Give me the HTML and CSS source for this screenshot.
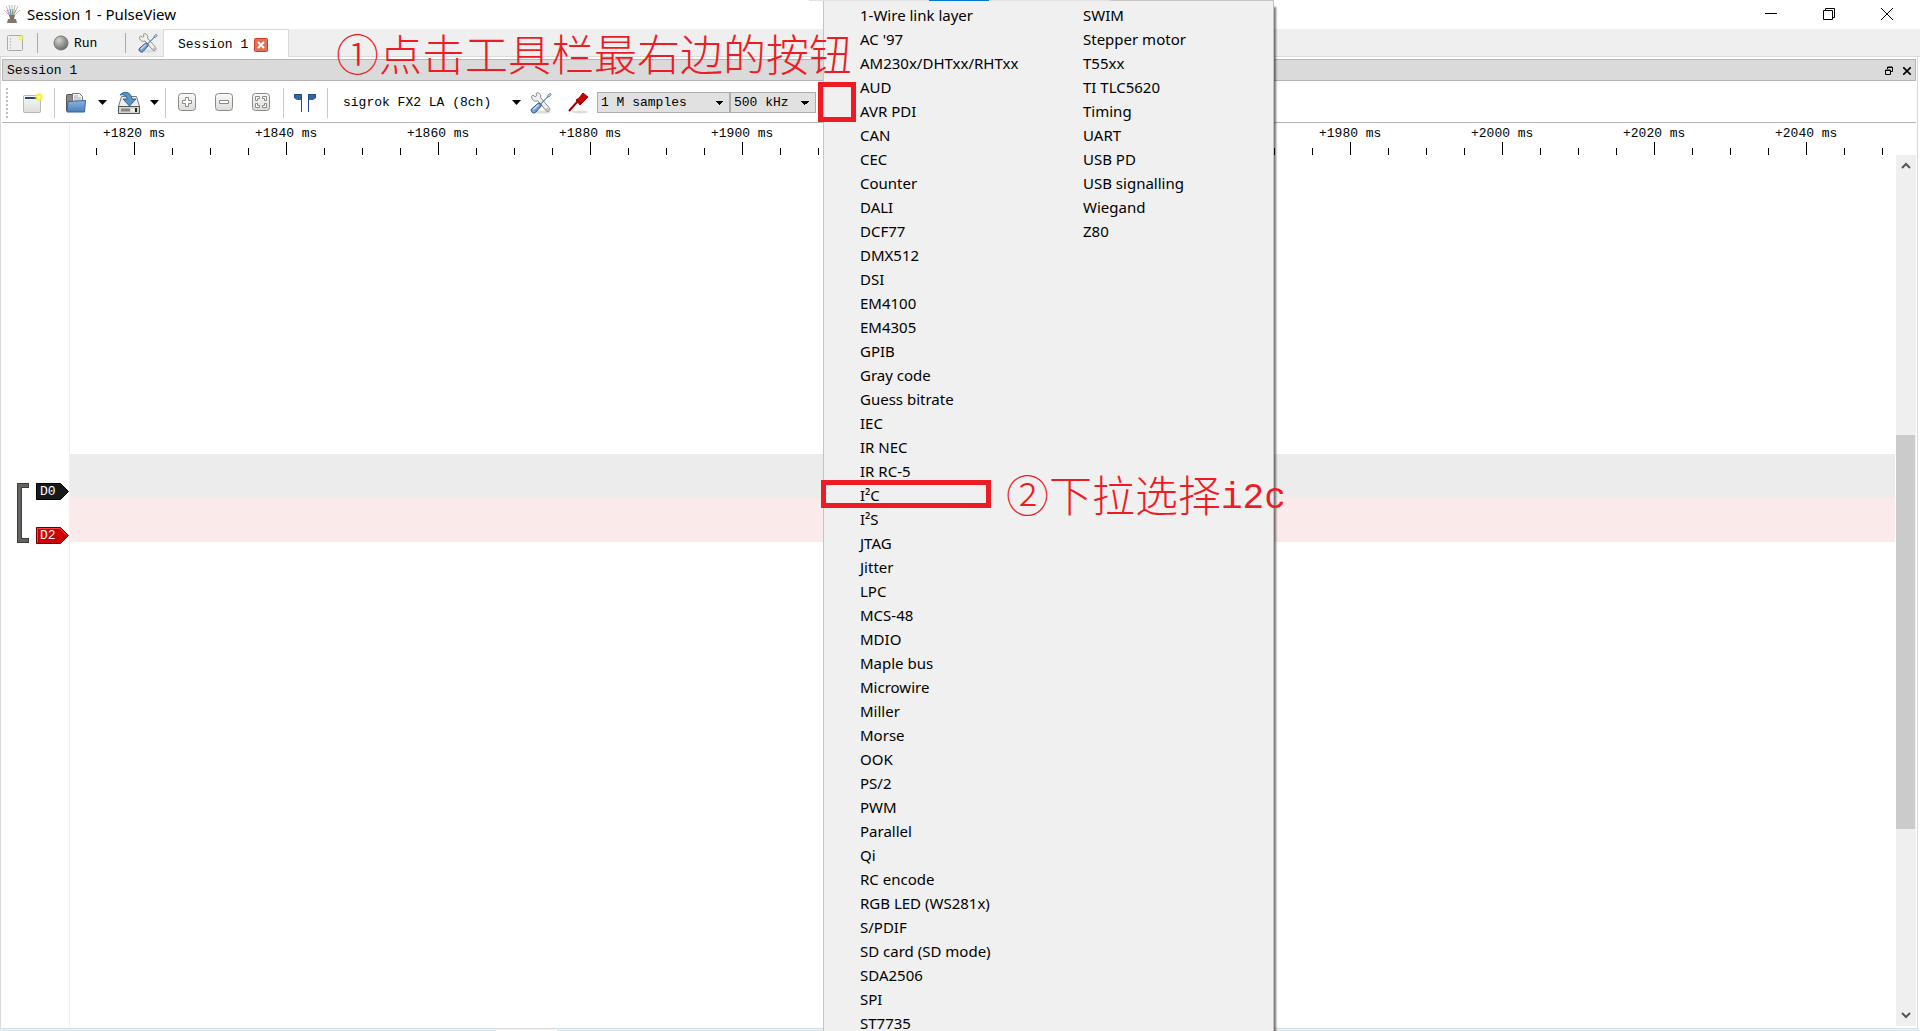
FILE: index.html
```html
<!DOCTYPE html>
<html lang="en">
<head>
    <meta charset="UTF-8">
    <meta name="viewport" content="width=device-width, initial-scale=1.0">
    <title>Session 1 - PulseView</title>
    <link rel="stylesheet" href="styles.css">
</head>
<body>
    <svg class="defs" width="0" height="0">
        <defs>
            <linearGradient id="blue" x1="0" y1="0" x2="0" y2="1"><stop offset="0" stop-color="#8db4e0"/><stop offset="1" stop-color="#4a7dbb"/></linearGradient>
            <linearGradient id="paper" x1="0" y1="0" x2="0" y2="1"><stop offset="0" stop-color="#fafafa"/><stop offset="1" stop-color="#dcdcda"/></linearGradient>
            <radialGradient id="ball" cx=".35" cy=".3" r=".75"><stop offset="0" stop-color="#d5d6d2"/><stop offset=".6" stop-color="#91938f"/><stop offset="1" stop-color="#666864"/></radialGradient>
            <radialGradient id="glow"><stop offset="0" stop-color="#fffde0"/><stop offset=".45" stop-color="#f8ef2a"/><stop offset="1" stop-color="#f8ef2a" stop-opacity="0"/></radialGradient>
            <symbol id="tools" viewBox="0 0 22 22">
                <ellipse cx="12" cy="20" rx="9" ry="1.6" fill="#ddd"/>
                <path d="M1.5 4.5 3 3.2l2.2 1.6 1.3-1L6 1.4 7.5.7c2.6.4 3.8 2.4 3 4.9l8.9 10.2c1.4 2-.9 4.7-3 3.2L7.8 8.8c-3.3 1.2-5.8-.5-6.3-4.3z" fill="#f0f0ee" stroke="#858783"/>
                <circle cx="17.4" cy="17.3" r=".9" fill="#fff" stroke="#858783" stroke-width=".7"/>
                <path d="M10 12.5 17.6 5l.3-1.9 2.3-1.7 1 .9-1.7 2.4-1.8.3-7.6 7.6z" fill="#d5e0ed" stroke="#4a78ad" stroke-width=".9"/>
                <path d="M8.2 11.3c1.5-.6 3.4 1 3 2.7L5.6 20.3c-2.2 2-5.7-.9-4-3.4z" fill="#7ca0cf" stroke="#204a87"/>
                <path d="m3.2 17.6 5.2-4.8" stroke="#d2e1f2" stroke-width="1.4"/>
            </symbol>
        </defs>
    </svg>

    <header class="titlebar">
        <svg class="logo" width="18" height="20" viewBox="0 0 18 20" fill="none">
            <path d="M8 13 1 6M8 12 3 2M9 12 6 1M9 12 9 1M10 12 12 1M10 12 15 2M10 13 17 6" stroke="#b8b8b8"/>
            <path d="m7 12-3-6" stroke="#c678c6"/><path d="m8 12-1-7" stroke="#6d91cf"/><path d="m9 12 1-7" stroke="#71ad5b"/><path d="m10 12 3-6" stroke="#df8b52"/>
            <path d="M6 11h6l-1 4H7z" fill="#77706b"/><path d="M5 15h8l1 4H4z" fill="#84766d"/>
        </svg>
        <h1>Session 1 - PulseView</h1>
        <div class="window-buttons">
            <button aria-label="Minimize"><svg width="12" height="12"><path d="M0 5.500h12" stroke="#000"/></svg></button>
            <button aria-label="Restore"><svg width="12" height="12" fill="none" stroke="#000"><path d="M.5 2.500h9v9h-9zM2.500 2V.5h9v9H10"/></svg></button>
            <button aria-label="Close"><svg width="12" height="12" stroke="#000"><path d="m0 0 12 12M12 0 0 12"/></svg></button>
        </div>
    </header>

    <nav class="main-toolbar">
        <button class="new-session" aria-label="New session">
            <svg width="18" height="18"><rect x=".5" y="1.500" width="15" height="15" rx="1" fill="#eeeeec" stroke="#aaa"/><path d="M3 5h1M3 8h1M3 11h1M3 14h1" stroke="#999"/><circle cx="14" cy="4" r="3.500" fill="url(#glow)" opacity=".7"/></svg>
        </button>
        <span class="sep"></span>
        <button class="run"><svg width="16" height="16"><circle cx="8" cy="8" r="7" fill="url(#ball)" stroke="#777974"/></svg>Run</button>
        <span class="sep"></span>
        <button class="settings" aria-label="Settings"><svg width="20" height="20"><use href="#tools"/></svg></button>
        <div class="tab">
            <a href="#session">Session 1</a>
            <button aria-label="Close tab"><svg width="14" height="14"><rect x=".5" y=".5" width="13" height="13" rx="1" fill="#e4714f" stroke="#cf3d24"/><path d="m4 4 6 6M10 4l-6 6" stroke="#fff" stroke-width="2"/></svg></button>
        </div>
    </nav>

    <main class="session" id="session">
        <div class="dock-title">
            <h2>Session 1</h2>
            <button aria-label="Float"><svg width="8" height="9" fill="none" stroke="#000"><path d="M.5 4h5v4.500h-5zM0 4.500h6M2.500 3V1h5v4.500H6M2 1.500h6"/></svg></button>
            <button aria-label="Close session"><svg width="8" height="8" stroke="#000" stroke-width="1.600"><path d="m0 0 8 8M8 0 0 8"/></svg></button>
        </div>

        <div class="toolbar">
            <span class="grip"></span>
            <button class="new-view" aria-label="New view">
                <svg width="22" height="22"><rect x="1.500" y="3.500" width="17" height="17" rx="1" fill="url(#paper)" stroke="#b6b8b4"/><path d="M3 6h15" stroke="#204a87" stroke-width="2"/><circle cx="17" cy="5" r="5" fill="url(#glow)"/></svg>
            </button>
            <span class="sep"></span>
            <button class="open" aria-label="Open">
                <svg width="22" height="22"><path d="M1.500 19V3.500q0-1 1-1H8l1 2h7v14" fill="#888a85" stroke="#555753"/><path d="M7.500 14V1.500h7l3 3V14" fill="#f4f4f4" stroke="#777"/><path d="M9 4h4M9 6h7M9 8h7" stroke="#aaa"/><path d="M3 9.500 20.500 8.500 19.500 20H2z" fill="url(#blue)" stroke="#3465a4"/></svg>
            </button>
            <button class="arrow" aria-label="Open menu"><svg width="9" height="5"><path d="M0 0h9L4.500 5z"/></svg></button>
            <button class="save" aria-label="Save">
                <svg width="24" height="24"><path d="M4.500 5.500h15l3 10v7h-21v-7z" fill="#eee" stroke="#777974"/><path d="M1.500 15.500h21v7h-21z" fill="#d3d7cf" stroke="#555753"/><path d="M4 19h9" stroke="#888" stroke-width="3"/><path d="M15 18v3M17 18v3" stroke="#fff"/><path d="M19 17v4" stroke="#222" stroke-width="2"/><path d="M3 4C6 0 14 0 15 8h4l-6.500 7L6 8h4C10 5 7 3 3 4z" fill="#5e93bd" stroke="#26659a"/></svg>
            </button>
            <button class="arrow" aria-label="Save menu"><svg width="9" height="5"><path d="M0 0h9L4.500 5z"/></svg></button>
            <span class="sep"></span>
            <button class="zoom" aria-label="Zoom in"><svg width="19" height="19" fill="none" stroke="#888a85"><rect x=".5" y=".5" width="17" height="17" rx="3" fill="url(#paper)"/><path d="M7.500 4.500h3v3h3v3h-3v3h-3v-3h-3v-3h3z" fill="#fff"/></svg></button>
            <button class="zoom" aria-label="Zoom out"><svg width="19" height="19" fill="none" stroke="#888a85"><rect x=".5" y=".5" width="17" height="17" rx="3" fill="url(#paper)"/><path d="M4.500 7.500h9v3h-9z" fill="#fff"/></svg></button>
            <button class="zoom" aria-label="Zoom to fit"><svg width="19" height="19" fill="none" stroke="#888a85"><rect x=".5" y=".5" width="17" height="17" rx="3" fill="url(#paper)"/><path d="M3.500 3.500h4v2h-2v2h-2zM14.500 3.500h-4v2h2v2h2zM3.500 14.500h4v-2h-2v-2h-2zM14.500 14.500h-4v-2h2v-2h2z" fill="#fff"/></svg></button>
            <span class="sep"></span>
            <button class="cursors" aria-label="Show cursors"><svg width="22" height="18"><path d="M0 0h8v18H7V6H3L0 4zM22 0h-8v18h1V6h4l3-2z" fill="#3465a4"/><path d="M.5 4V.5h7V18M21.500 4V.5h-7V18" fill="none" stroke="#204a87"/></svg></button>
            <span class="sep"></span>
            <button class="device">sigrok FX2 LA (8ch)<svg width="9" height="5"><path d="M0 0h9L4.500 5z"/></svg></button>
            <button class="configure" aria-label="Configure device"><svg width="22" height="22"><use href="#tools"/></svg></button>
            <button class="probe" aria-label="Channels"><svg width="21" height="22"><ellipse cx="12" cy="20" rx="8" ry="1.400" fill="#ddd"/><path d="m1 19 9-10" stroke="#a40000" stroke-width="2"/><path d="m8 8 3-2 4-5 5 4-5 5-3 3z" fill="#c00" stroke="#a40000"/><path d="m9 8 4 4" stroke="#a40000"/></svg></button>
            <select class="samples" aria-label="Number of samples"><option>1 M samples</option></select>
            <select class="rate" aria-label="Sample rate"><option>500 kHz</option></select>
        </div>

        <div class="view">
            <div class="channels">
                <svg class="bracket" width="13" height="61" fill="none"><path d="M13 2.500H3.500v55H13" stroke="#3c3e3b" stroke-width="5"/><path d="M12 2.500H3.500v55H12" stroke="#626460" stroke-width="3"/></svg>
                <div class="tags">
                    <div class="tag"><svg width="33" height="17"><path d="M.5.500h24l8 8-8 8H.5z" fill="#161a1b" stroke="#000"/></svg><span>D0</span></div>
                    <div class="tag"><svg width="33" height="17"><path d="M.5.500h24l8 8-8 8H.5z" fill="#c00" stroke="#600"/><path d="M1.500 15.500v-14h22.500l7 7" fill="none" stroke="#f44"/></svg><span>D2</span></div>
                </div>
            </div>
            <div class="plot">
                <div class="ruler">
                    <span>+1820 ms</span><span>+1840 ms</span><span>+1860 ms</span><span>+1880 ms</span><span>+1900 ms</span><span>+1920 ms</span><span>+1940 ms</span><span>+1960 ms</span><span>+1980 ms</span><span>+2000 ms</span><span>+2020 ms</span><span>+2040 ms</span>
                </div>
                <div class="traces">
                    <div class="lanes">
                        <div class="lane d0"></div>
                        <div class="lane d2"></div>
                    </div>
                    <div class="scrollbar">
                        <button aria-label="Scroll up"><svg width="10" height="8" fill="none" stroke="#555" stroke-width="2"><path d="m1 6 4-4 4 4"/></svg></button>
                        <div class="scroll-track"><div class="thumb"></div></div>
                        <button aria-label="Scroll down"><svg width="10" height="8" fill="none" stroke="#555" stroke-width="2"><path d="m1 1 4 4 4-4"/></svg></button>
                    </div>
                </div>
            </div>
        </div>
    </main>
    <footer class="desktop-edge"><span></span></footer>

    <!-- protocol decoder list -->
    <div class="top-edge"><span></span></div>
    <menu class="decoders">
        <li><button>1-Wire link layer</button></li>
        <li><button>AC '97</button></li>
        <li><button>AM230x/DHTxx/RHTxx</button></li>
        <li><button>AUD</button></li>
        <li><button>AVR PDI</button></li>
        <li><button>CAN</button></li>
        <li><button>CEC</button></li>
        <li><button>Counter</button></li>
        <li><button>DALI</button></li>
        <li><button>DCF77</button></li>
        <li><button>DMX512</button></li>
        <li><button>DSI</button></li>
        <li><button>EM4100</button></li>
        <li><button>EM4305</button></li>
        <li><button>GPIB</button></li>
        <li><button>Gray code</button></li>
        <li><button>Guess bitrate</button></li>
        <li><button>IEC</button></li>
        <li><button>IR NEC</button></li>
        <li><button>IR RC-5</button></li>
        <li><button>I²C</button></li>
        <li><button>I²S</button></li>
        <li><button>JTAG</button></li>
        <li><button>Jitter</button></li>
        <li><button>LPC</button></li>
        <li><button>MCS-48</button></li>
        <li><button>MDIO</button></li>
        <li><button>Maple bus</button></li>
        <li><button>Microwire</button></li>
        <li><button>Miller</button></li>
        <li><button>Morse</button></li>
        <li><button>OOK</button></li>
        <li><button>PS/2</button></li>
        <li><button>PWM</button></li>
        <li><button>Parallel</button></li>
        <li><button>Qi</button></li>
        <li><button>RC encode</button></li>
        <li><button>RGB LED (WS281x)</button></li>
        <li><button>S/PDIF</button></li>
        <li><button>SD card (SD mode)</button></li>
        <li><button>SDA2506</button></li>
        <li><button>SPI</button></li>
        <li><button>ST7735</button></li>
        <li><button>SWIM</button></li>
        <li><button>Stepper motor</button></li>
        <li><button>T55xx</button></li>
        <li><button>TI TLC5620</button></li>
        <li><button>Timing</button></li>
        <li><button>UART</button></li>
        <li><button>USB PD</button></li>
        <li><button>USB signalling</button></li>
        <li><button>Wiegand</button></li>
        <li><button>Z80</button></li>
    </menu>

    <!-- tutorial notes -->
    <p class="note step-one" lang="zh-CN">①点击工具栏最右边的按钮</p>
    <div class="mark mark-button"></div>
    <div class="mark mark-item"></div>
    <p class="note step-two" lang="zh-CN">②下拉选择<span>i2c</span></p>
</body>
</html>
```
FILE: styles.css
```css
* {
    margin: 0;
    padding: 0;
    box-sizing: border-box;
}
body {
    position: relative;
    display: flex;
    flex-direction: column;
    height: 100vh;
    overflow: hidden;
    background: #fff;
    color: #000;
    font-family: "Liberation Mono", monospace;
    font-size: 13px;
}
button, select {
    border: none;
    background: none;
    font: inherit;
    color: inherit;
}
button {
    display: flex;
    align-items: center;
    flex-shrink: 0;
}
svg {
    display: block;
    flex-shrink: 0;
}
.defs {
    position: absolute;
}
.sep {
    width: 1px;
    background: #c8c8c8;
    flex-shrink: 0;
}

/* window title */
.titlebar {
    display: flex;
    align-items: center;
    height: 29px;
    padding: 0 4px 2px 3px;
    gap: 6px;
}
.titlebar h1 {
    flex: 1;
    font: 15px "Noto Sans", sans-serif;
}
.window-buttons {
    display: flex;
}
.window-buttons button {
    width: 58px;
    height: 27px;
    justify-content: center;
}

/* main toolbar with session tab */
.main-toolbar {
    display: flex;
    align-items: center;
    height: 28px;
    background: #efefef;
    box-shadow: inset 0 -1px #d9d9d9;
}
.main-toolbar .sep {
    height: 20px;
    background: #aaa;
}
.new-session {
    width: 37px;
    padding-left: 7px;
}
.run {
    width: 87px;
    padding-left: 15px;
    gap: 5px;
}
.settings {
    width: 37px;
    padding-left: 12px;
}
.tab {
    display: flex;
    align-items: center;
    gap: 6px;
    width: 126px;
    height: 28px;
    padding: 2px 0 0 14px;
    background: #fff;
    border: 1px solid #d9d9d9;
    border-bottom: none;
}
.tab a {
    color: inherit;
    text-decoration: none;
}

/* session pane */
.session {
    display: flex;
    flex-direction: column;
    flex: 1;
    min-height: 0;
    margin-right: 2px;
    padding: 2px 1px 2px 1px;
    border: 1px solid #d9d9d9;
    border-top: none;
}
.dock-title {
    display: flex;
    align-items: center;
    gap: 10px;
    height: 22px;
    padding: 1px 4px 0;
    background: #dadada;
    border: 1px solid #b5b5b5;
}
.dock-title h2 {
    flex: 1;
    font-size: 13px;
    font-weight: normal;
}
.toolbar {
    display: flex;
    align-items: center;
    height: 42px;
    padding-top: 2px;
    border-bottom: 1px solid #b5b5b5;
}
.toolbar .sep {
    height: 30px;
}
.grip {
    width: 2px;
    height: 30px;
    margin: 0 14px 0 4px;
    background: repeating-linear-gradient(#bbb 0 2px, transparent 2px 4px);
}
.new-view {
    width: 32px;
}
.open {
    width: 43px;
    padding-left: 10px;
}
.arrow {
    width: 19px;
}
.save {
    width: 33px;
}
.arrow + .sep {
    margin-right: 12px;
    margin-left: -4px;
}
.zoom {
    width: 37px;
}
.zoom + .sep {
    margin-left: -6px;
}
.cursors {
    width: 43px;
    padding-left: 10px;
}
.device {
    width: 202px;
    padding-left: 15px;
    justify-content: space-between;
    padding-right: 9px;
}
.configure {
    width: 38px;
}
.probe {
    width: 29px;
}
select {
    height: 21px;
    padding-left: 3px;
    border: 1px solid #adadad;
    appearance: none;
    background: #e1e1e1 no-repeat;
    /* drop-down triangle */
    background-image: conic-gradient(from -45deg at 50% 100%, #000 90deg, transparent 0);
    background-size: 8px 4px;
    background-position: right 6px top 8px;
    border-radius: 0;
}
.samples {
    width: 133px;
}
.rate {
    width: 86px;
}

/* trace view */
.view {
    display: flex;
    flex: 1;
    min-height: 0;
}
.channels {
    display: flex;
    align-items: flex-start;
    gap: 7px;
    width: 68px;
    padding: 360px 0 0 14px;
    border-right: 1px solid #efefef;
}
.tags {
    display: flex;
    flex-direction: column;
    gap: 27px;
}
.tag {
    display: grid;
    color: #fff;
}
.tag svg, .tag span {
    grid-area: 1 / 1;
}
.tag span {
    padding-left: 4px;
    line-height: 18px;
    height: 17px;
}
.plot {
    display: flex;
    flex-direction: column;
    flex: 1;
    min-width: 0;
}
.ruler {
    display: flex;
    height: 32px;
    padding-left: 33px;
    overflow: hidden;
    line-height: 22px;
    background-image:
        repeating-linear-gradient(to right, #000 0 1px, transparent 1px 152px),
        repeating-linear-gradient(to right, #000 0 1px, transparent 1px 38px);
    background-repeat: no-repeat;
    background-size: 100% 13px, 1787px 7px;
    background-position: 64px 100%, 26px 100%;
}
.ruler span {
    flex: 0 0 152px;
}
.traces {
    display: flex;
    flex: 1;
    gap: 1px;
    min-height: 0;
}
.lanes {
    flex: 1;
    padding-top: 299px;
}
.lane {
    height: 44px;
}
.d0 {
    background: #ececec;
}
.d2 {
    background: #fbeaea;
}
.scrollbar {
    display: flex;
    flex-direction: column;
    width: 20px;
    background: #efefef;
}
.scrollbar button {
    height: 21px;
    justify-content: center;
}
.scroll-track {
    flex: 1;
    padding: 259px 1px 0 0;
}
.thumb {
    height: 394px;
    background: #cbcbcb;
}
.desktop-edge {
    height: 2px;
    padding-left: 496px;
    background: #d3e3ea;
    border-top: 1px solid #f4f4f4;
}
.desktop-edge span {
    display: block;
    width: 61px;
    height: 1px;
    background: #fff;
}

/* decoder menu, drawn over the session */
.top-edge {
    position: absolute;
    top: 0;
    left: 809px;
    width: 465px;
    height: 1px;
    padding-left: 120px;
    background: linear-gradient(to right, #e3e3e3 301px, #c4c4c4 301px);
    z-index: 2;
}
.top-edge span {
    display: block;
    width: 60px;
    height: 1px;
    background: #0078d7;
}
.decoders {
    position: absolute;
    top: 0;
    left: 823px;
    display: grid;
    grid-template-rows: repeat(43, 24px);
    grid-auto-flow: column;
    grid-auto-columns: 223px;
    width: 451px;
    height: 100%;
    padding: 3px 0 0 36px;
    overflow: hidden;
    list-style: none;
    background: #f0f0f0;
    border: 1px solid #c4c4c4;
    border-bottom: none;
    border-top: none;
    box-shadow: 3px 6px 2px -1px rgba(0, 0, 0, 0.55);
    font-family: "Noto Sans", sans-serif;
    font-size: 15px;
}
.decoders button {
    height: 24px;
}

/* notes */
.note {
    position: absolute;
    color: #ed1c24;
    font-family: "Noto Sans CJK SC", sans-serif;
    font-size: 43px;
    font-weight: 300;
    line-height: 44px;
    white-space: nowrap;
}
.note span {
    font-family: "Liberation Mono", monospace;
    font-size: 36px;
    vertical-align: 4px;
}
.step-one {
    left: 336px;
    top: 30px;
}
.step-two {
    left: 1006px;
    top: 471px;
}
.mark {
    position: absolute;
    border: 5px solid #ed1c24;
}
.mark-button {
    left: 818px;
    top: 82px;
    width: 38px;
    height: 40px;
}
.mark-item {
    left: 821px;
    top: 480px;
    width: 170px;
    height: 28px;
}
```
